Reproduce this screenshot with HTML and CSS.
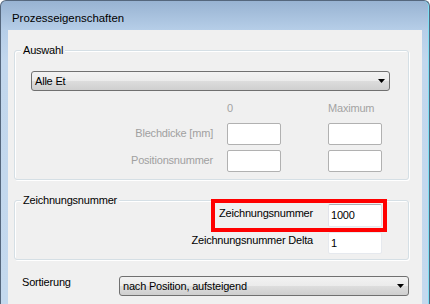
FILE: index.html
```html
<!DOCTYPE html>
<html lang="de">
<head>
    <meta charset="UTF-8">
    <meta name="viewport" content="width=device-width, initial-scale=1.0">
    <title>Prozesseigenschaften</title>
    <link rel="stylesheet" href="styles.css">
</head>
<body>
    <div class="window">
        <div class="titlebar">Prozesseigenschaften</div>
        <div class="client">

            <div class="group group-auswahl">
                <div class="group-title">Auswahl</div>
                <div class="combo combo-auswahl">
                    <span class="combo-text">Alle Et</span>
                    <svg class="combo-arrow" width="7" height="4" viewBox="0 0 7 4"><polygon points="0,0 7,0 3.5,4" fill="#000"/></svg>
                </div>
                <div class="range-grid">
                    <span></span>
                    <span class="col-head">0</span>
                    <span class="col-head">Maximum</span>

                    <span class="field-label disabled">Blechdicke [mm]</span>
                    <span class="textbox"></span>
                    <span class="textbox"></span>

                    <span class="field-label disabled">Positionsnummer</span>
                    <span class="textbox"></span>
                    <span class="textbox"></span>
                </div>
            </div><!--auswahl-->

            <div class="group group-zeichnung">
                <div class="group-title">Zeichnungsnummer</div>
                <div class="number-grid">
                    <span class="field-label">Zeichnungsnummer</span>
                    <span class="textbox textbox-edit">1000</span>

                    <span class="field-label">Zeichnungsnummer Delta</span>
                    <span class="textbox textbox-edit textbox-plain">1</span>
                </div>
                <div class="highlight"></div>
            </div><!--zeichnungsnummer-->

            <div class="sort-row">
                <span class="sort-label">Sortierung</span>
                <div class="combo combo-sort">
                    <span class="combo-text">nach Position, aufsteigend</span>
                    <svg class="combo-arrow" width="7" height="4" viewBox="0 0 7 4"><polygon points="0,0 7,0 3.5,4" fill="#000"/></svg>
                </div>
            </div>

        </div>
    </div>
</body>
</html>
```

FILE: styles.css
```css
html, body {
    margin: 0;
    padding: 0;
    background: #fff;
}

body {
    font-family: 'Liberation Sans', Arial, sans-serif;
    font-size: 11px;
    letter-spacing: -0.2px;
    color: #000;
}

.window {
    box-sizing: border-box;
    width: 430px;
    height: 304px;
    overflow: hidden;
    display: flex;
    flex-direction: column;
    padding: 0 7px 0 7px;
    border: 1px solid #55677d;
    border-bottom: none;
    border-radius: 6px 6px 0 0;
    background: linear-gradient(#98b3d2 0, #b6cee8 29px, #c2d7ed 60px, #c4d9ee 100%);
    box-shadow: inset -1px 0 0 #7fe0f5;
}

.titlebar {
    box-sizing: border-box;
    height: 29px;
    padding: 5px 0 0 4px;
    line-height: 24px;
    font-size: 11.4px;
    letter-spacing: 0;
    color: #000;
}

.client {
    flex: 1;
    display: flex;
    flex-direction: column;
    padding: 0 13px 0 6px;
    background: #f0f0f0;
}

/* group boxes */

.group {
    position: relative;
    border: 1px solid #d5dfe5;
    border-radius: 3px;
    box-shadow: inset 1px 1px 0 #fff, 1px 1px 0 #fff;
}

.group-title {
    width: fit-content;
    margin: -8px 0 0 6px;
    padding: 0 2px;
    line-height: 14px;
    background: #f0f0f0;
}

.group-auswahl {
    margin-top: 20px;
    padding-bottom: 7px;
}

.group-zeichnung {
    margin-top: 20px;
    padding-bottom: 5px;
}

/* combo boxes */

.combo {
    box-sizing: border-box;
    height: 20px;
    display: flex;
    align-items: center;
    justify-content: space-between;
    padding: 0 4px 0 3px;
    border: 1px solid #707070;
    border-radius: 3px;
    background: linear-gradient(#f2f2f2 0%, #ebebeb 50%, #dddddd 50%, #cfcfcf 100%);
    line-height: 14px;
}

.combo-auswahl {
    margin: 14px 18px 0 16px;
}

.combo-sort {
    width: 290px;
}

.combo-arrow {
    display: block;
}

/* text boxes */

.textbox {
    box-sizing: border-box;
    width: 54px;
    height: 22px;
    padding: 0 2px;
    border: 1px solid #b1b1b1;
    border-radius: 2px;
    background: #fff;
    line-height: 20px;
}

.textbox-edit {
    height: 23px;
    line-height: 21px;
    border-color: #abadb3 #dbdfe6 #e3e9ef #e2e3ea;
}

.textbox-plain {
    height: 22px;
    border-color: #e6e9ee;
}

/* label grids */

.range-grid {
    display: grid;
    grid-template-columns: 212px 101px 54px;
    grid-template-rows: 17px 22px 22px;
    row-gap: 5px;
    margin-top: 10px;
}

.col-head {
    line-height: 14px;
    color: #a3a3a3;
}

.field-label {
    align-self: center;
    padding: 0 14px 3px 0;
    text-align: right;
    line-height: 14px;
}

.disabled {
    color: #a0a0a0;
}

.number-grid {
    display: grid;
    grid-template-columns: 313px 54px;
    row-gap: 5px;
    margin-top: -3px;
}

.number-grid .field-label {
    padding: 0 15px 6px 0;
}

.highlight {
    position: absolute;
    left: 196px;
    top: -2px;
    width: 176px;
    height: 33px;
    box-sizing: border-box;
    border: 4px solid #ff0000;
}

/* sort row */

.sort-row {
    display: flex;
    align-items: center;
    margin-top: 15px;
}

.sort-label {
    width: 97px;
    margin-left: 8px;
    padding-bottom: 8px;
    line-height: 14px;
}
```
